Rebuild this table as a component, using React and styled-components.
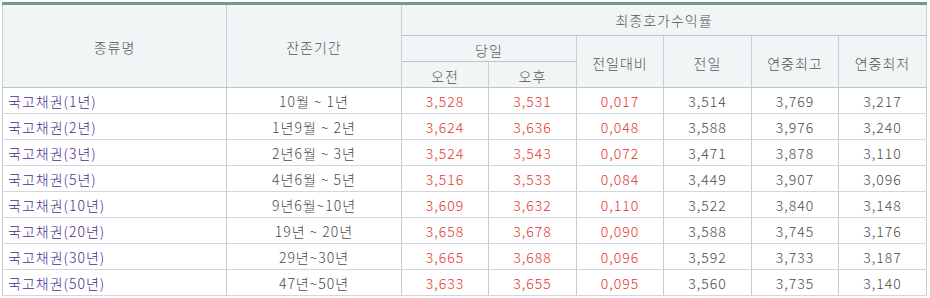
import React from 'react'
import styled, { createGlobalStyle } from 'styled-components'

const Global = createGlobalStyle`
    body{
        margin:0;
        background:#fff;
    }
`

const Wrap = styled.div`
    padding:2px 0 0 2px;
`

const Table = styled.table`
    width:925px;
    table-layout:fixed;
    border-collapse:collapse;
    border-top:3px solid #6d9b8e;
    border-left:1px solid #c9cdd3;
    font-family:"Noto Sans CJK KR", "Noto Sans", sans-serif;
    font-size:14px;
    font-weight:300;
    letter-spacing:1px;
`

const Th = styled.th`
    background:#f1f5f5;
    color:#555;
    font-weight:300;
    text-align:center;
    vertical-align:middle;
    padding:${p => p.$h ? 0 : 2}px 0 0;
    border-right:1px solid #c9cdd3;
    border-bottom:1px solid #b8c6d4;
    height:${p => p.$h || 23}px;
`

const Td = styled.td`
    color:${p => p.$red ? '#e3342a' : p.$name ? '#4b2a8c' : '#4a4a4a'};
    text-align:${p => p.$name ? 'left' : 'center'};
    padding:1px 0 0 ${p => p.$name ? 5 : 0}px;
    height:24px;
    border-right:1px solid #c9cdd3;
    border-bottom:1px solid #d3d6dc;
    white-space:nowrap;
`

const rows = [
    ['국고채권(1년)', '10월 ~ 1년', '3,528', '3,531', '0,017', '3,514', '3,769', '3,217'],
    ['국고채권(2년)', '1년9월 ~ 2년', '3,624', '3,636', '0,048', '3,588', '3,976', '3,240'],
    ['국고채권(3년)', '2년6월 ~ 3년', '3,524', '3,543', '0,072', '3,471', '3,878', '3,110'],
    ['국고채권(5년)', '4년6월 ~ 5년', '3,516', '3,533', '0,084', '3,449', '3,907', '3,096'],
    ['국고채권(10년)', '9년6월~10년', '3,609', '3,632', '0,110', '3,522', '3,840', '3,148'],
    ['국고채권(20년)', '19년 ~ 20년', '3,658', '3,678', '0,090', '3,588', '3,745', '3,176'],
    ['국고채권(30년)', '29년~30년', '3,665', '3,688', '0,096', '3,592', '3,733', '3,187'],
    ['국고채권(50년)', '47년~50년', '3,633', '3,655', '0,095', '3,560', '3,735', '3,140'],
]

const widths = [224, 175, 87, 88, 87, 88, 87, 88]

const App = () => {
    return (
        <>
        <Global />
        <Wrap>
            <Table>
                <colgroup>
                    {widths.map((w, i) => <col key={i} style={{ width: w }} />)}
                </colgroup>
                <thead>
                    <tr>
                        <Th rowSpan={3}>종류명</Th>
                        <Th rowSpan={3}>잔존기간</Th>
                        <Th colSpan={6} $h={30}>최종호가수익률</Th>
                    </tr>
                    <tr>
                        <Th colSpan={2}>당일</Th>
                        <Th rowSpan={2}>전일대비</Th>
                        <Th rowSpan={2}>전일</Th>
                        <Th rowSpan={2}>연중최고</Th>
                        <Th rowSpan={2}>연중최저</Th>
                    </tr>
                    <tr>
                        <Th>오전</Th>
                        <Th>오후</Th>
                    </tr>
                </thead>
                <tbody>
                    {rows.map(r => (
                        <tr key={r[0]}>
                            <Td $name>{r[0]}</Td>
                            <Td>{r[1]}</Td>
                            <Td $red>{r[2]}</Td>
                            <Td $red>{r[3]}</Td>
                            <Td $red>{r[4]}</Td>
                            <Td>{r[5]}</Td>
                            <Td>{r[6]}</Td>
                            <Td>{r[7]}</Td>
                        </tr>
                    ))}
                </tbody>
            </Table>
        </Wrap>
        </>
    )
}

export default App
